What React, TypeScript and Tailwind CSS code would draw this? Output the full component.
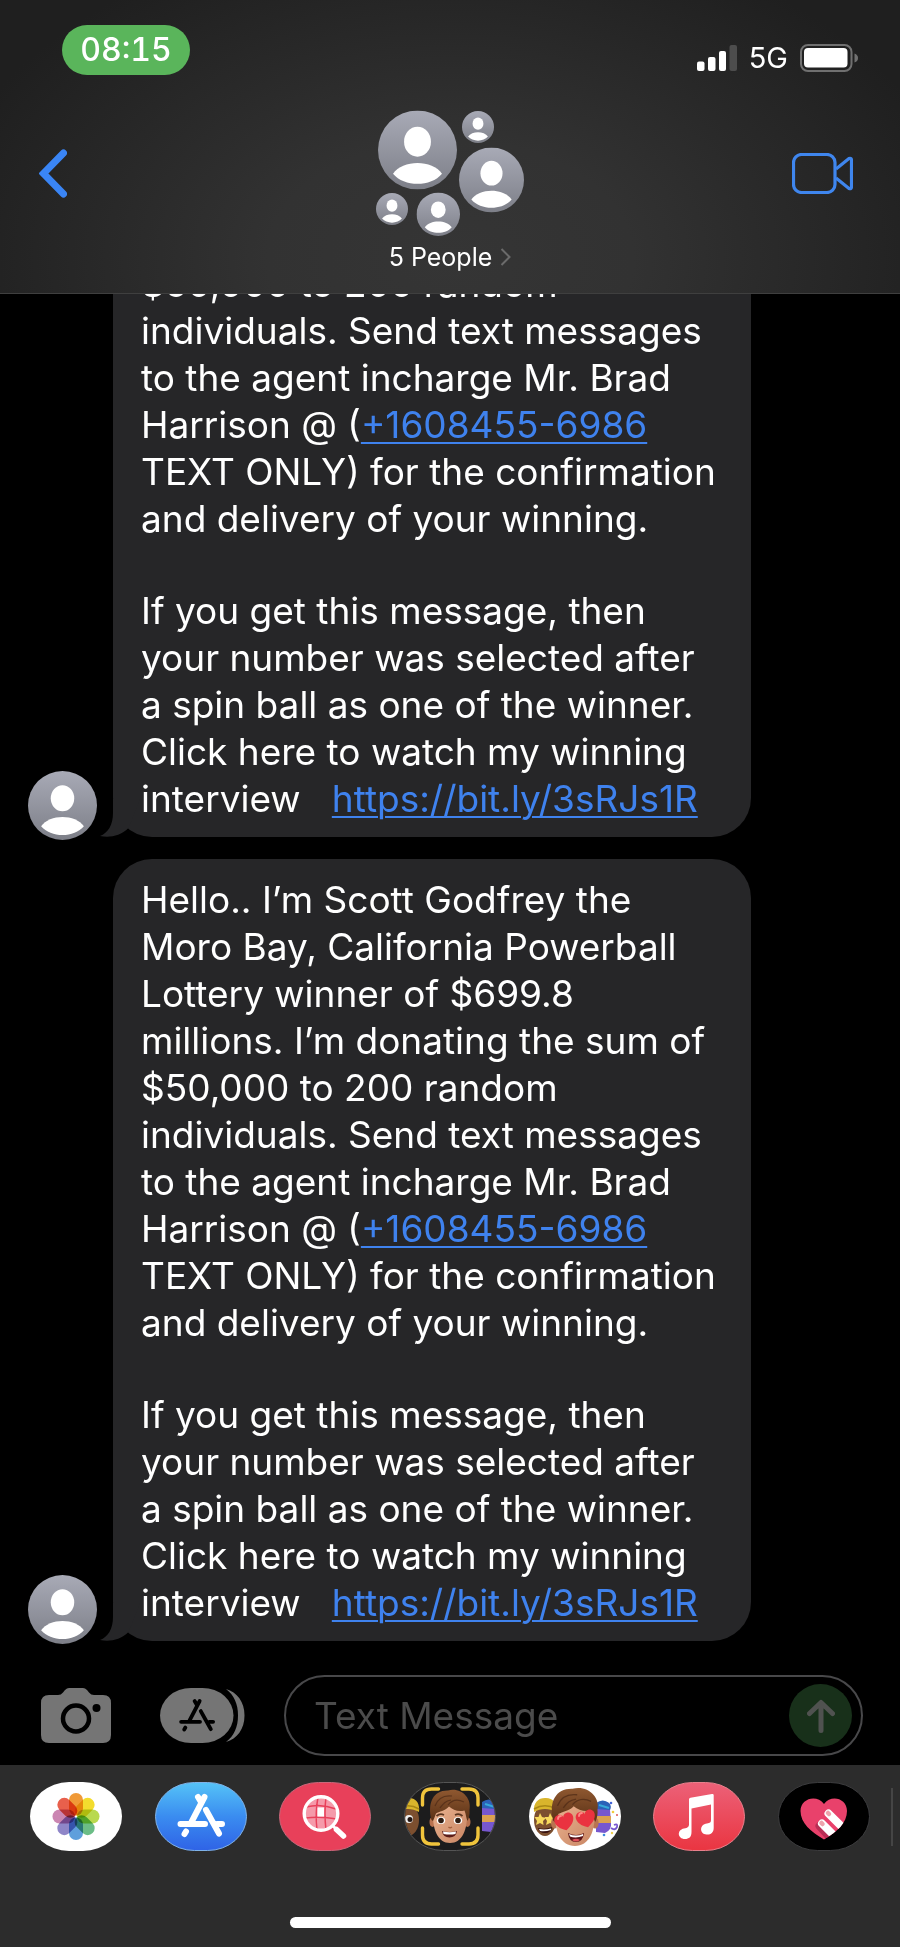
import React, { useState } from 'react';

// --- Shared pieces ---
const Person = ({ x = 0, y = 0, size = 100 }: { x?: number; y?: number; size?: number }) => (
  <svg x={x} y={y} width={size} height={size} viewBox="0 0 100 100">
    <defs>
      <linearGradient id="personBg" x1="0" y1="0" x2="0" y2="1">
        <stop offset="0" stopColor="#a8aab6" />
        <stop offset="1" stopColor="#7d7f88" />
      </linearGradient>
    </defs>
    <circle cx="50" cy="50" r="50" fill="url(#personBg)" />
    <ellipse cx="50" cy="39.5" rx="17" ry="19" fill="#fff" />
    <path d="M19 80C31 62 69 62 81 80C67 97 33 97 19 80Z" fill="#fff" />
  </svg>
);

const AppStoreGlyph = ({ color, width }: { color: string; width: number }) => (
  <g stroke={color} strokeWidth={width} strokeLinecap="round" fill="none">
    <path d="M49.5 15L36.5 40M43 15L46 20M31 49.5L29.5 52M51 28L64 51.5M25.5 42H50M62 42H67" />
  </g>
);

// --- Status bar ---
const StatusBar = () => (
  <div className="flex items-end justify-between pt-[25px] pl-[62px] pr-[42px]">
    <button className="h-[50px] w-32 rounded-full bg-[#5ab55b] text-[32px] leading-[50px] font-medium text-white tabular-nums">08:15</button>
    <div className="flex items-center gap-3 pb-[3px] text-white">
      <svg width="40" height="26" viewBox="0 0 40 26" fill="#fff">
        <rect x="0" y="16.5" width="7.5" height="9.5" rx="2" />
        <rect x="11" y="12" width="7.5" height="14" rx="2" />
        <rect x="22" y="6" width="7" height="20" rx="2" />
        <rect x="32.5" y="0" width="7.5" height="26" rx="2" fill="#4d4d4d" />
      </svg>
      <span className="text-[29px] leading-7">5G</span>
      <svg width="58" height="28" viewBox="0 0 58 28">
        <rect x="1" y="1" width="50.5" height="26" rx="7" fill="none" stroke="#707070" strokeWidth="2" />
        <rect x="4" y="4" width="43.5" height="19.5" rx="4" fill="#fff" />
        <path d="M54.5 9.5C57 10.5 58 12 58 14S57 17.5 54.5 18.5Z" fill="#707070" />
      </svg>
    </div>
  </div>
);

const Header = () => (
  <header className="shrink-0 border-b border-[#3f3f3f] bg-[radial-gradient(ellipse_58%_115%_at_50%_88%,#353535_0%,#323232_35%,#1f1f1f_100%)]">
    <StatusBar />
    <div className="flex items-start justify-between pt-[35px] pr-[47px] pb-[21px] pl-[39px]">
      <button aria-label="Back" className="flex h-[126px] w-[69px] items-center">
        <svg width="28" height="50" viewBox="0 0 28 50" fill="none">
          <path d="M24.5 5L4.5 25.5L24.5 46" stroke="#3a85f5" strokeWidth="7" strokeLinecap="round" strokeLinejoin="miter" />
        </svg>
      </button>
      <button className="flex flex-col items-center gap-1.5 text-[25px] leading-[30px] text-white">
        <svg width="148" height="126" viewBox="0 0 148 126">
          <Person x={2} y={0.5} size={79} />
          <Person x={86} y={1} size={32} />
          <Person x={83} y={37.5} size={65} />
          <Person x={0} y={83} size={32} />
          <Person x={40.5} y={82.5} size={43.5} />
        </svg>
        <span className="flex items-center gap-2">
          5 People
          <svg width="11" height="18" viewBox="0 0 11 18" fill="none">
            <path d="M1.5 1L9.5 9L1.5 17" stroke="#6b6b6b" strokeWidth="2" />
          </svg>
        </span>
      </button>
      <button aria-label="Video call" className="flex h-[126px] items-center">
        <svg width="61" height="41" viewBox="0 0 61 41" fill="none" stroke="#3f86ee" strokeWidth="3.2" strokeLinejoin="round">
          <rect x="1.5" y="1.5" width="41.5" height="38" rx="8" />
          <path d="M44 16L57 5.5Q59.5 4.5 59.5 7.5V33.5Q59.5 36.5 57 35.5L44 25" />
        </svg>
      </button>
    </div>
  </header>
);

// --- Messages ---
const Link = ({ href, children }: { href: string; children: React.ReactNode }) => (
  <a href={href} className="text-[#3f82ee] underline decoration-2 underline-offset-4">{children}</a>
);

const Message = ({ intro }: { intro?: React.ReactNode }) => (
  <li className="flex items-end gap-4">
    <svg width="69" height="69" className="shrink-0" viewBox="0 0 100 100"><Person /></svg>
    <div className="relative mb-[3px] w-[638px] rounded-[39px] bg-[#262628] px-7 pt-[17px] pb-[15px] text-[37px] leading-[47px] text-white">
      <svg className="absolute bottom-0 -left-[13px]" width="50" height="38" viewBox="0 0 50 38">
        <path d="M13 0V14C13 26 8 34 0 37C10 39 20 37 28.5 29L40 0Z" fill="#262628" />
      </svg>
      <p className="relative whitespace-nowrap">
        {intro}
        $50,000 to 200 random<br />
        individuals. Send text messages<br />
        to the agent incharge Mr. Brad<br />
        Harrison @ (<Link href="sms:+16084556986">+1608455-6986</Link><br />
        TEXT ONLY) for the confirmation<br />
        and delivery of your winning.
      </p>
      <p className="relative mt-[45px] whitespace-nowrap">
        If you get this message, then<br />
        your number was selected after<br />
        a spin ball as one of the winner.<br />
        Click here to watch my winning<br />
        interview{'\u00a0\u00a0 '}<Link href="https://bit.ly/3sRJs1R">https://bit.ly/3sRJs1R</Link>
      </p>
    </div>
  </li>
);

// --- Composer ---
const Composer = () => {
  const [text, setText] = useState('');
  return (
    <form className="flex shrink-0 items-center pt-[31px] pr-[37px] pb-[9px] pl-[41px]" onSubmit={e => e.preventDefault()}>
      <button type="button" aria-label="Camera">
        <svg width="70" height="55" viewBox="0 0 70 55">
          <path d="M8 7H17Q20 7 22 4.5L24 2Q26 0 28 0H42Q44 0 46 2L48 4.5Q50 7 53 7H62Q70 7 70 15V47Q70 55 62 55H8Q0 55 0 47V15Q0 7 8 7Z" fill="#757575" />
          <circle cx="35" cy="30.5" r="13" fill="none" stroke="#000" strokeWidth="4.5" />
          <circle cx="55.5" cy="20" r="4" fill="#000" />
        </svg>
      </button>
      <button type="button" aria-label="Apps" className="ml-[49px]">
        <svg width="85" height="55" viewBox="0 0 85 55">
          <path d="M66 1C77 4 84.5 14 84.5 27.5S77 51 66 54C74 48 78 39 78 27.5S74 7 66 1Z" fill="#757575" />
          <rect width="73.5" height="55" rx="31" ry="27.5" fill="#757575" />
          <g transform="translate(1.5 1.5) scale(0.77)">
            <AppStoreGlyph color="#000" width={5} />
          </g>
        </svg>
      </button>
      <div className="ml-[39px] flex h-[81px] min-w-0 flex-1 items-center rounded-full border-2 border-[#48484a] pr-[9px] pl-7">
        <input
          aria-label="Text Message"
          value={text}
          onChange={e => setText(e.target.value)}
          placeholder="Text Message"
          className="min-w-0 flex-1 bg-transparent text-[37px] leading-[47px] text-white outline-none placeholder:text-[#4b4b4b]"
        />
        <button aria-label="Send" className="flex size-[63px] items-center justify-center rounded-full bg-[#18301a]">
          <svg width="28" height="34" viewBox="0 0 28 34" fill="none" stroke="#505250" strokeWidth="5" strokeLinecap="round" strokeLinejoin="round">
            <path d="M14 4V31.5M2.5 14.5L14 3.5L25.5 14.5" />
          </svg>
        </button>
      </div>
    </form>
  );
};

// --- App drawer ---
const petals = ['#f09a37', '#f3dc2e', '#b9d94f', '#6bbd86', '#5f9fdc', '#8f86c8', '#cb86b2', '#e8604c'];

const PhotosIcon = () => (
  <g>
    <rect width="92" height="69" rx="39" ry="34.5" fill="#fff" />
    <g style={{ isolation: 'isolate' }}>
      {petals.map((color, i) => (
        <rect key={color} x="39" y="11" width="14" height="22.5" rx="7" fill={color} transform={`rotate(${i * 45} 46 34.5)`} style={{ mixBlendMode: 'multiply' }} />
      ))}
    </g>
  </g>
);

const StoreIcon = () => (
  <g>
    <linearGradient id="store" x1="0" y1="0" x2="0" y2="1">
      <stop offset="0" stopColor="#55c3f7" />
      <stop offset="0.5" stopColor="#3a8cf0" />
      <stop offset="1" stopColor="#2f63e6" />
    </linearGradient>
    <rect x="0.5" y="0.5" width="91" height="68" rx="39" ry="34" fill="url(#store)" stroke="#7fb2e8" />
    <AppStoreGlyph color="#fff" width={6} />
  </g>
);

const ImagesIcon = () => (
  <g>
    <rect x="0.5" y="0.5" width="91" height="68" rx="39" ry="34" fill="#e8405a" stroke="#c9677a" />
    <circle cx="42" cy="31.5" r="16" fill="#f59aaa" />
    <g stroke="#e8405a" strokeWidth="1.5" fill="none">
      <path d="M27 25Q42 21 57 27M26 36Q42 34 58 37M39 15Q36 31 38 48M47 15Q45 31 47 48" />
    </g>
    <path d="M38.5 25.5H45V34.5H38.5Z" fill="#fff" />
    <circle cx="42" cy="31.5" r="16.8" fill="none" stroke="#fff" strokeWidth="3.4" />
    <path d="M54 44L58 48" stroke="#fff" strokeWidth="3" />
    <path d="M57.5 47.5L64.5 54" stroke="#fff" strokeWidth="5.5" strokeLinecap="round" />
  </g>
);

const FaceBase = () => (
  <g>
    <ellipse cx="28.5" cy="40" rx="3" ry="5" fill="#b97350" />
    <ellipse cx="63.5" cy="40" rx="3" ry="5" fill="#b97350" />
    <path d="M29 28C28 48 34 61 46 61S64 48 63 28C60 18 32 18 29 28Z" fill="url(#skin)" />
    <path d="M27.5 38C23 20 30 8 44 8.5C57 5 68 16 65.5 28C66 33 64.5 37 63.5 39C62 36 62 32 60.5 28.5C54 30 49 28 45 24.5C41 29 35 29.5 32 31.5C31 34 30 37 29 39Z" fill="url(#hair)" />
    <path d="M31 24C34 16 40 13 48 14M44 23C48 18 54 17 60 20M36 26C39 22 41 19 47 18" stroke="#4d2a15" strokeWidth="1.2" fill="none" opacity="0.7" />
  </g>
);

const StarFriend = () => (
  <g>
    <ellipse cx="16" cy="38" rx="11" ry="16" fill="#7c4f2f" />
    <path d="M5 30C4 20 10 15.5 17 16C24 16 28 21 27 30C20 26 12 26 5 30Z" fill="#d9b52c" />
    <path d="M5 27C12 23 20 23 27 27" stroke="#a98715" strokeWidth="1.5" fill="none" />
  </g>
);

const Genie = () => (
  <g>
    <path d="M67 23Q70 18 78 20Q82 21 81 28L82 40Q83 48 76 51L67 50Z" fill="#7757cf" />
    <path d="M67 21Q74 16 80 21Q83 24 81 28L67 27Z" fill="#2b62b8" />
    <path d="M67 34H82V41H67Z" fill="#dba150" />
    <path d="M70 23L80 26" stroke="#37a9d8" strokeWidth="2" />
  </g>
);

const MemojiIcon = () => (
  <g>
    <clipPath id="memojiClip"><rect x="1" y="1" width="90" height="67" rx="38" ry="33.5" /></clipPath>
    <rect x="0.5" y="0.5" width="91" height="68" rx="39" ry="34" fill="#1c1c1d" stroke="#555" />
    <g clipPath="url(#memojiClip)">
      <g transform="translate(-12 0)">
        <StarFriend />
        <ellipse cx="17" cy="37" rx="4" ry="4" fill="#eee" />
        <circle cx="18" cy="37.5" r="2.5" fill="#221510" />
      </g>
      <g transform="translate(11 -1)"><Genie /></g>
    </g>
    <FaceBase />
    <ellipse cx="37" cy="38.5" rx="4.2" ry="3.5" fill="#fff" />
    <ellipse cx="54" cy="38.5" rx="4.2" ry="3.5" fill="#fff" />
    <circle cx="37" cy="38.5" r="2.8" fill="#2d1c12" />
    <circle cx="54" cy="38.5" r="2.8" fill="#2d1c12" />
    <path d="M32.5 34Q36 31 40 33M51 33Q55 31 58.5 34" stroke="#5a3520" strokeWidth="1.8" fill="none" />
    <path d="M44.5 45Q46 46.5 48 45" stroke="#a4613f" strokeWidth="1.3" fill="none" />
    <path d="M38 49Q46 51 53 49Q52 55.5 45.5 55.5Q39 55.5 38 49Z" fill="#5b1d18" />
    <path d="M39 49.5Q46 51 52 49.5L51.5 52Q46 53 39.5 52Z" fill="#fff" />
    <path d="M18.5 23V16Q18.5 7 27.5 7H34.5M58 7H65Q74 7 74 16V23M74 46V53Q74 62 65 62H58M34.5 62H27.5Q18.5 62 18.5 53V46" fill="none" stroke="#f0c43c" strokeWidth="3.4" strokeLinecap="round" />
  </g>
);

const heart = 'M0 8C-12 2 -10 -8 -4 -8C-1.5 -8 0 -6 0 -4.5C0 -6 1.5 -8 4 -8C10 -8 12 2 0 8Z';

const StickersIcon = () => (
  <g>
    <rect width="92" height="69" rx="39" ry="34.5" fill="#fff" />
    <StarFriend />
    <path d="M9 46Q16 48 23 45Q22 51 16 51Q10 51 9 46Z" fill="#35100e" />
    <path d="M10 47Q16 48 22 46.5V48Q16 50 11 49Z" fill="#fff" />
    <path d="M11 31L13 35L17 36L14 39L14.5 43L11 41L7 43L8 39L5.5 35L9.5 35Z" fill="#f7d95c" />
    <path d="M21 31L23 35L27 36L24 39L24.5 43L21 41L17 43L18 39L15.5 35L19.5 35Z" fill="#f7d95c" />
    <Genie />
    <path d="M82 46Q86 49 88 45Q89 41 85 43" stroke="#7757cf" strokeWidth="1.8" fill="none" />
    <circle cx="82" cy="21" r="1.3" fill="#4666d8" />
    <circle cx="84" cy="30" r="1.3" fill="#f1cb3c" />
    <circle cx="75" cy="53" r="1.3" fill="#3e8bdc" />
    <circle cx="83" cy="51" r="1.2" fill="#efcf4e" />
    <circle cx="88" cy="33" r="1" fill="#d55" />
    <g transform="translate(-7.5 -2.5) scale(1.16 1.09)"><FaceBase /></g>
    <path d="M39 51Q47 55 55 51Q54 60 47 60Q40 60 39 51Z" fill="#5b1418" />
    <path d="M40 52Q47 55 54 52V54Q47 56.5 41 54.5Z" fill="#fff" />
    <path d="M43 58Q47 55.5 51 58Q47 61 43 58Z" fill="#e0505a" />
    <path d={heart} fill="#ea3340" transform="translate(35.5 40) rotate(-14) scale(1.1 1.05)" />
    <path d={heart} fill="#ea3340" transform="translate(57 37) rotate(-14) scale(1.1 1.05)" />
    <path d="M29 37Q29 34 32 34M50 34Q50 31 53 31" stroke="#ff8a86" strokeWidth="1.8" strokeLinecap="round" fill="none" />
  </g>
);

const MusicIcon = () => (
  <g>
    <linearGradient id="music" x1="0" y1="0" x2="0" y2="1">
      <stop offset="0" stopColor="#ec6178" />
      <stop offset="1" stopColor="#ea3541" />
    </linearGradient>
    <rect x="0.5" y="0.5" width="91" height="68" rx="39" ry="34" fill="url(#music)" stroke="#e8808c" />
    <path d="M36 17.5Q36 16 37.5 15.7L59 12Q60.7 11.7 60.7 13.3V46C60.7 51 57 53 53.5 52.5C46.5 52 46 42.5 54 41.5C57 41 58 40.5 58 38V22.5L38.5 26.5V50C38.5 55 36 57 32 57C24.5 57 23.5 48 31 46.5C35 45.7 36 45 36 42Z" fill="#fff" />
  </g>
);

const TouchIcon = () => (
  <g>
    <clipPath id="heartClip">
      <path d="M46 57.5C33 50 22.5 41 22.5 29C22.5 16 39 12 46 22C53 12 69 16 69 29C69 41 59 50 46 57.5Z" />
    </clipPath>
    <rect x="0.5" y="0.5" width="91" height="68" rx="39" ry="34" fill="#000" stroke="#3c3c3e" />
    <g clipPath="url(#heartClip)">
      <rect x="20" y="14" width="50" height="45" fill="#e9416b" />
      <g strokeLinecap="round">
        <path d="M41.5 44L56 60" stroke="#b82e55" strokeWidth="8" />
        <path d="M50.5 31.5L68 49M44 41.5L60 57.5" stroke="#fff" strokeWidth="8" />
        <path d="M50 31L51 32M43.5 41L44.5 42" stroke="#eda3ac" strokeWidth="4.5" />
      </g>
    </g>
  </g>
);

const apps = [
  { name: 'Photos', Icon: PhotosIcon },
  { name: 'App Store', Icon: StoreIcon },
  { name: 'Images', Icon: ImagesIcon },
  { name: 'Memoji', Icon: MemojiIcon },
  { name: 'Memoji Stickers', Icon: StickersIcon },
  { name: 'Music', Icon: MusicIcon },
  { name: 'Digital Touch', Icon: TouchIcon },
];

const AppDrawer = () => (
  <footer className="shrink-0 bg-[#2c2c2c] pt-[17px] pb-[19px]">
    {/* gradients used by both memoji faces */}
    <svg width="0" height="0" className="absolute">
      <linearGradient id="skin" x1="0" y1="0" x2="1" y2="1">
        <stop offset="0" stopColor="#ebb592" />
        <stop offset="1" stopColor="#c98563" />
      </linearGradient>
      <linearGradient id="hair" x1="0" y1="0" x2="0" y2="1">
        <stop offset="0" stopColor="#8f5830" />
        <stop offset="1" stopColor="#5a3116" />
      </linearGradient>
    </svg>
    <div className="flex items-center gap-[21px] pr-[7px] pl-[30px]">
      <nav className="flex flex-1 justify-between">
        {apps.map(({ name, Icon }) => (
          <button key={name} aria-label={name}>
            <svg width="92" height="69" viewBox="0 0 92 69"><Icon /></svg>
          </button>
        ))}
      </nav>
      <div className="h-[58px] w-0.5 bg-[#454545]" />
    </div>
    <div className="mx-auto mt-[66px] h-[11px] w-[321px] rounded-full bg-white" />
  </footer>
);

const App: React.FC = () => (
  <div className="flex h-screen flex-col bg-black font-['Inter',sans-serif]">
    <Header />
    <main className="flex min-h-0 flex-1 flex-col justify-end overflow-hidden pl-7">
      <ul className="flex flex-col gap-[19px]">
        <Message />
        <Message
          intro={
            <>
              Hello.. I’m Scott Godfrey the<br />
              Moro Bay, California Powerball<br />
              Lottery winner of $699.8<br />
              millions. I’m donating the sum of<br />
            </>
          }
        />
      </ul>
    </main>
    <Composer />
    <AppDrawer />
  </div>
);

export default App;
